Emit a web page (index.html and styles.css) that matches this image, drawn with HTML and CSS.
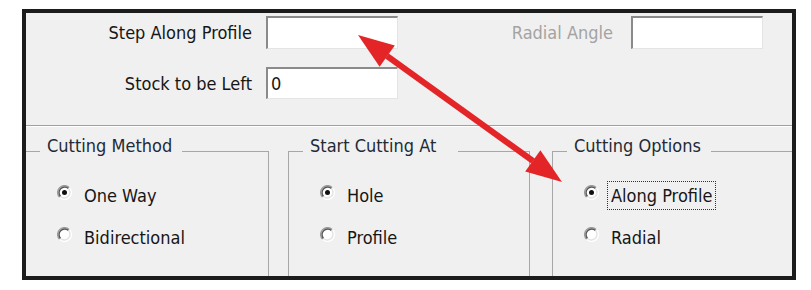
FILE: index.html
```html
<!DOCTYPE html>
<html lang="en">
<head>
    <meta charset="UTF-8">
    <meta name="viewport" content="width=device-width, initial-scale=1.0">
    <title>Profile Cutting</title>
    <link rel="stylesheet" href="styles.css">
</head>
<body>
    <svg class="defs" width="0" height="0">
        <symbol id="radio-off" viewBox="0 0 12 12">
            <circle cx="6" cy="6" r="5" fill="#fff"/>
            <path d="M2.11 9.89 A5.5 5.5 0 0 1 9.89 2.11" fill="none" stroke="#9a9a9a" stroke-width="1.1"/>
            <path d="M2.82 9.18 A4.5 4.5 0 0 1 9.18 2.82" fill="none" stroke="#555" stroke-width="1.1"/>
            <path d="M9.89 2.11 A5.5 5.5 0 0 1 2.11 9.89" fill="none" stroke="#fff" stroke-width="1.1"/>
            <path d="M9.18 2.82 A4.5 4.5 0 0 1 2.82 9.18" fill="none" stroke="#e3e3e3" stroke-width="1.1"/>
        </symbol>
        <symbol id="radio-on" viewBox="0 0 12 12">
            <use href="#radio-off"/>
            <circle cx="6" cy="6" r="2" fill="#111"/>
        </symbol>
    </svg>

    <div class="dialog">
        <div class="params">
            <label class="field-label label-main">Step Along Profile</label>
            <input class="field" type="text">
            <label class="field-label label-side disabled">Radial Angle</label>
            <input class="field" type="text" readonly>
            <label class="field-label label-main">Stock to be Left</label>
            <input class="field" type="text" value="0">
        </div>

        <div class="groups">
            <fieldset class="group group-method">
                <legend>Cutting Method</legend>
                <div class="options">
                    <label class="option"><svg class="radio"><use href="#radio-on"/></svg><span class="text">One Way</span></label>
                    <label class="option"><svg class="radio"><use href="#radio-off"/></svg><span class="text">Bidirectional</span></label>
                </div>
            </fieldset>
            <fieldset class="group group-start">
                <legend>Start Cutting At</legend>
                <div class="options">
                    <label class="option"><svg class="radio"><use href="#radio-on"/></svg><span class="text">Hole</span></label>
                    <label class="option"><svg class="radio"><use href="#radio-off"/></svg><span class="text">Profile</span></label>
                </div>
            </fieldset>
            <fieldset class="group group-options">
                <legend>Cutting Options</legend>
                <div class="options">
                    <label class="option"><svg class="radio"><use href="#radio-on"/></svg><span class="text focused">Along Profile</span></label>
                    <label class="option"><svg class="radio"><use href="#radio-off"/></svg><span class="text">Radial</span></label>
                </div>
            </fieldset>
        </div>
    </div>

    <!-- callout arrow drawn over the dialog -->
    <svg class="callout" width="811" height="290" viewBox="0 0 811 290">
        <line x1="387" y1="56" x2="533" y2="161" stroke="#e42528" stroke-width="6"/>
        <polygon points="358,35 379.6,66.7 394.8,45.5" fill="#e42528"/>
        <polygon points="562,182 525.2,171.5 540.4,150.3" fill="#e42528"/>
    </svg>
</body>
</html>
```

FILE: styles.css
```css
* {
    box-sizing: border-box;
}

body {
    margin: 0;
    background: #fff;
    font-family: "DejaVu Sans Condensed", "DejaVu Sans", sans-serif;
    font-stretch: condensed;
    font-size: 18px;
    color: #161616;
}

.defs {
    position: absolute;
}

.dialog {
    margin: 9px 0 0 22px;
    width: 774px;
    height: 271px;
    border: 4px solid #1c1c1c;
    background: #f0f0f0;
    overflow: hidden;
}

.params {
    height: 113px;
    padding-top: 3px;
    display: grid;
    grid-template-columns: 240px 132px 233px 132px;
    grid-template-rows: 33px 32px;
    row-gap: 18px;
    align-items: center;
    border-bottom: 1px solid #a0a0a0;
    box-shadow: 0 1px 0 #fff;
}

.field-label {
    text-align: right;
    white-space: nowrap;
}

.label-main {
    padding-right: 14px;
}

.label-side {
    padding-right: 18px;
}

.disabled {
    color: #a3a3a3;
}

.field {
    align-self: stretch;
    width: 132px;
    padding: 0 3px;
    font: inherit;
    color: #161616;
    background: #fff;
    border-top: 2px solid #8a8a8a;
    border-left: 2px solid #8a8a8a;
    border-right: 1px solid #e4e4e4;
    border-bottom: 1px solid #e4e4e4;
    outline: none;
}

.groups {
    display: flex;
    align-items: flex-start;
    height: 149px;
}

.group {
    flex-shrink: 0;
    margin: 10px 0 0;
    padding: 0;
    height: 200px;
    min-width: 0;
    border: 1px solid #a7a7a7;
}

.group-method {
    margin-left: -1px;
    width: 244px;
}

.group-start {
    margin-left: 19px;
    width: 242px;
}

.group-options {
    margin-left: 22px;
    width: 250px;
}

legend {
    margin-left: 14px;
    padding: 0 10px 10px 7px;
    line-height: 20px;
    color: #232a36;
}

.group-start legend {
    padding-right: 22px;
}

.options {
    display: flex;
    flex-direction: column;
    gap: 13px;
    padding: 15px 0 0 31px;
}

.option {
    display: flex;
    align-items: center;
    height: 29px;
}

.radio {
    width: 15px;
    height: 15px;
    margin: 0 8px 6px 0;
}

.text {
    padding: 0 3px;
    line-height: 27px;
    border: 1px dotted transparent;
}

.text.focused {
    border-color: #333;
}

.callout {
    position: absolute;
    top: 0;
    left: 0;
    pointer-events: none;
}
```
